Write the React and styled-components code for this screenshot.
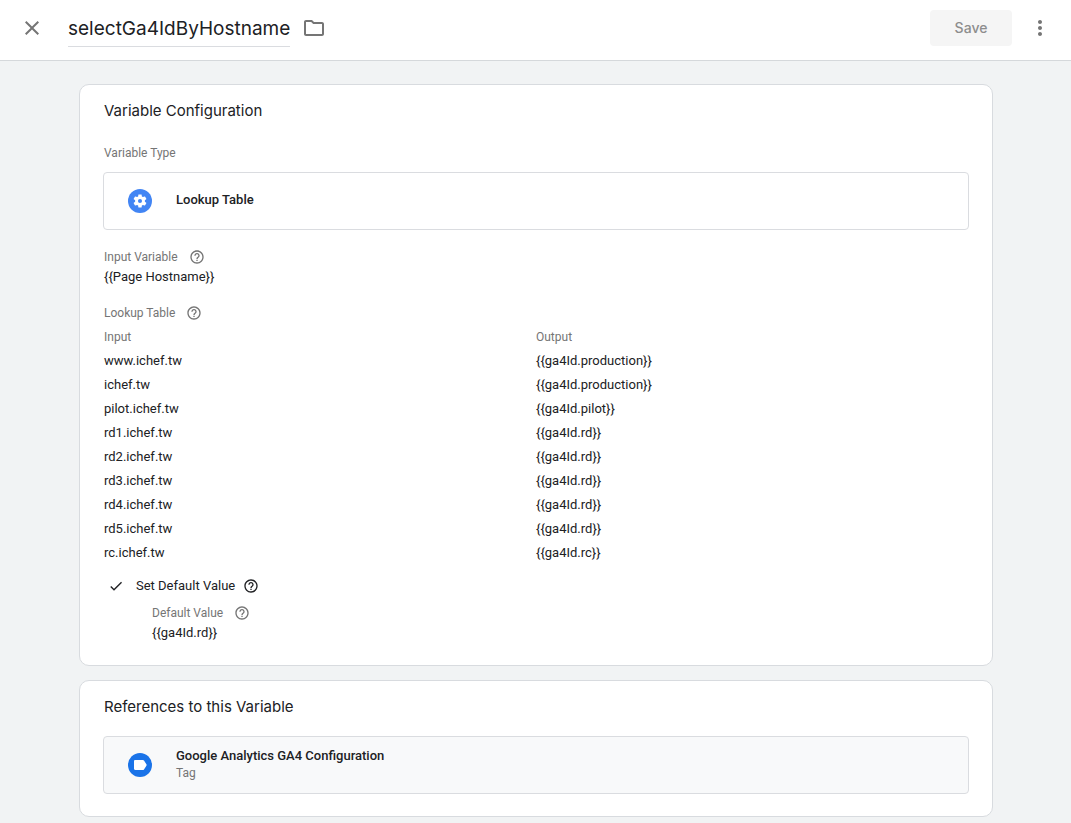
import React from "react";
import styled, { createGlobalStyle } from "styled-components";

const GlobalStyle = createGlobalStyle`
  *, *::before, *::after { box-sizing: border-box; }
  html { background: #f1f3f4; }
  body {
    margin: 0;
    background: #f1f3f4;
    color: #202124;
    font: 400 13px/20px Roboto, sans-serif;
  }
`;

const TopBar = styled.header`
  display: flex;
  align-items: center;
  height: 61px;
  padding: 0 19px 4px 20px;
  background: #fff;
  border-bottom: 1px solid #d5d8db;
`;

const IconButton = styled.button`
  display: inline-flex;
  align-items: center;
  justify-content: center;
  flex: none;
  width: ${(p) => p.$size || 24}px;
  height: ${(p) => p.$size || 24}px;
  padding: 0;
  border: 0;
  background: none;
  color: ${(p) => p.$color || "#757575"};
  cursor: pointer;
`;

const NameInput = styled.input`
  field-sizing: content;
  min-width: 40px;
  height: 36px;
  margin: 2px 12px 0 24px;
  padding: 0;
  border: 0;
  border-bottom: 1px solid #dadce0;
  outline: 0;
  background: none;
  color: #202124;
  font: 400 19px/32px Inter, sans-serif;
`;

const SaveButton = styled.button`
  width: 82px;
  height: 36px;
  margin: 0 16px 0 auto;
  border: 0;
  border-radius: 4px;
  background: #f5f5f5;
  color: #8d8d8d;
  font: 500 14px/20px Inter, sans-serif;
`;

const Page = styled.main`
  display: flex;
  flex-direction: column;
  gap: 14px;
  padding: 23px 78px 5px 79px;
`;

const Card = styled.section`
  padding: 14px 24px 22px;
  background: #fff;
  border: 1px solid #d8dbdf;
  border-radius: 10px;
`;

const CardTitle = styled.h2`
  margin: 0 0 ${(p) => p.$gap}px;
  font: 400 15px/24px Inter, sans-serif;
`;

const Label = styled.div`
  display: flex;
  align-items: center;
  gap: 11px;
  color: #757575;
  font-size: 12px;
`;

const Field = styled.div`
  margin-top: ${(p) => p.$top || 0}px;
`;

const entity = `
  display: flex;
  align-items: center;
  gap: 24px;
  min-height: 58px;
  padding: 0 24px;
  border: 1px solid #dadce0;
  border-radius: 4px;
  color: inherit;
  text-align: left;
  text-decoration: none;
`;

const TypeButton = styled.button`
  ${entity}
  width: calc(100% + 2px);
  margin: 9px -1px 0;
  background: #fff;
  font: inherit;
  cursor: pointer;
`;

const ReferenceLink = styled.a`
  ${entity}
  margin: 0 -1px;
  background: #f8f9fa;
`;

const EntityText = styled.span`
  display: flex;
  flex-direction: column;
  padding-bottom: 2px;
`;

const EntityName = styled.strong`
  font-weight: 500;
  line-height: 18px;
`;

const EntityKind = styled.span`
  color: #757575;
  font-size: 12px;
  line-height: 16px;
`;

const Table = styled.table`
  width: 100%;
  margin-top: 2px;
  border-collapse: collapse;
  table-layout: fixed;
  th, td { height: 24px; padding: 0; text-align: left; }
  th { color: #757575; font-size: 12px; font-weight: 400; }
`;

const CheckRow = styled.div`
  display: flex;
  align-items: center;
  gap: 8px;
  margin-top: 11px;
`;

const CheckLabel = styled.label`
  display: flex;
  align-items: center;
  gap: 8px;
`;

const CheckBox = styled.span`
  display: grid;
  width: 24px;
  height: 20px;
  place-items: center;
  > * { grid-area: 1 / 1; }
  input { appearance: none; width: 16px; height: 16px; margin: 0; }
  svg { visibility: hidden; pointer-events: none; }
  input:checked + svg { visibility: visible; }
`;

const Nested = styled.div`
  margin: 7px 0 0 48px;
`;

function Glyph({ size = 24, d }) {
  return (
    <svg width={size} height={size} viewBox="0 0 24 24" fill="currentColor" aria-hidden="true">
      <path d={d} />
    </svg>
  );
}

const paths = {
  close: "M19 6.41 17.59 5 12 10.59 6.41 5 5 6.41 10.59 12 5 17.59 6.41 19 12 13.41 17.59 19 19 17.59 13.41 12z",
  folder: "M9.17 6l2 2H20v10H4V6h5.17M10 4H4c-1.1 0-1.99.9-1.99 2L2 18c0 1.1.9 2 2 2h16c1.1 0 2-.9 2-2V8c0-1.1-.9-2-2-2h-8l-2-2z",
  more: "M12 8c1.1 0 2-.9 2-2s-.9-2-2-2-2 .9-2 2 .9 2 2 2zm0 2c-1.1 0-2 .9-2 2s.9 2 2 2 2-.9 2-2-.9-2-2-2zm0 6c-1.1 0-2 .9-2 2s.9 2 2 2 2-.9 2-2-.9-2-2-2z",
  help: "M11 18h2v-2h-2v2zm1-16C6.48 2 2 6.48 2 12s4.48 10 10 10 10-4.48 10-10S17.52 2 12 2zm0 18c-4.41 0-8-3.59-8-8s3.59-8 8-8 8 3.59 8 8-3.59 8-8 8zm0-14c-2.21 0-4 1.79-4 4h2c0-1.1.9-2 2-2s2 .9 2 2c0 2-3 1.75-3 5h2c0-2.25 3-2.5 3-5 0-2.21-1.79-4-4-4z",
  check: "M9 16.17 4.83 12l-1.42 1.41L9 19 21 7l-1.41-1.41z",
  gear: "M19.14 12.94c.04-.3.06-.61.06-.94 0-.32-.02-.64-.07-.94l2.03-1.58c.18-.14.23-.41.12-.61l-1.92-3.32c-.12-.22-.37-.29-.59-.22l-2.39.96c-.5-.38-1.03-.7-1.62-.94l-.36-2.54c-.04-.24-.24-.41-.48-.41h-3.84c-.24 0-.43.17-.47.41l-.36 2.54c-.59.24-1.13.57-1.62.94l-2.39-.96c-.22-.08-.47 0-.59.22L2.74 8.87c-.12.21-.08.47.12.61l2.03 1.58c-.05.3-.09.63-.09.94s.02.64.07.94l-2.03 1.58c-.18.14-.23.41-.12.61l1.92 3.32c.12.22.37.29.59.22l2.39-.96c.5.38 1.03.7 1.62.94l.36 2.54c.05.24.24.41.48.41h3.84c.24 0 .44-.17.47-.41l.36-2.54c.59-.24 1.13-.56 1.62-.94l2.39.96c.22.08.47 0 .59-.22l1.92-3.32c.12-.22.07-.47-.12-.61l-2.01-1.58zM12 15a3 3 0 1 1 0-6 3 3 0 0 1 0 6z",
};

function Help({ color }) {
  return (
    <IconButton $size={16} $color={color} aria-label="Help">
      <Glyph size={16} d={paths.help} />
    </IconButton>
  );
}

function GearBadge() {
  return (
    <svg width="24" height="24" viewBox="0 0 24 24" aria-hidden="true">
      <circle cx="12" cy="12" r="12" fill="#4285f4" />
      <g transform="translate(3.84 3.84) scale(.68)" fill="#fff">
        <path d={paths.gear} />
      </g>
    </svg>
  );
}

function TagBadge() {
  return (
    <svg width="24" height="24" viewBox="0 0 24 24" aria-hidden="true">
      <circle cx="12" cy="12" r="12" fill="#1a73e8" />
      <path d="M7.2 7h7.6c.5 0 .9.2 1.2.6l2.4 3.7c.3.4.3 1 0 1.4L16 16.4c-.3.4-.7.6-1.2.6H7.2c-.7 0-1.2-.5-1.2-1.2V8.2C6 7.5 6.5 7 7.2 7z" fill="#fff" />
    </svg>
  );
}

const rows = [
  ["www.ichef.tw", "{{ga4Id.production}}"],
  ["ichef.tw", "{{ga4Id.production}}"],
  ["pilot.ichef.tw", "{{ga4Id.pilot}}"],
  ["rd1.ichef.tw", "{{ga4Id.rd}}"],
  ["rd2.ichef.tw", "{{ga4Id.rd}}"],
  ["rd3.ichef.tw", "{{ga4Id.rd}}"],
  ["rd4.ichef.tw", "{{ga4Id.rd}}"],
  ["rd5.ichef.tw", "{{ga4Id.rd}}"],
  ["rc.ichef.tw", "{{ga4Id.rc}}"],
];

export default function App() {
  return (
    <>
      <GlobalStyle />
      <TopBar>
        <IconButton aria-label="Close"><Glyph d={paths.close} /></IconButton>
        <NameInput aria-label="Variable name" defaultValue="selectGa4IdByHostname" spellCheck={false} />
        <IconButton aria-label="Move to folder"><Glyph d={paths.folder} /></IconButton>
        <SaveButton disabled>Save</SaveButton>
        <IconButton aria-label="More actions"><Glyph d={paths.more} /></IconButton>
      </TopBar>
      <Page>
        <Card>
          <CardTitle $gap={20}>Variable Configuration</CardTitle>
          <Label>Variable Type</Label>
          <TypeButton>
            <GearBadge />
            <EntityText><EntityName>Lookup Table</EntityName></EntityText>
          </TypeButton>
          <Field $top={17}>
            <Label>Input Variable <Help /></Label>
            <div>{"{{Page Hostname}}"}</div>
          </Field>
          <Field $top={16}>
            <Label>Lookup Table <Help /></Label>
            <Table>
              <thead>
                <tr><th scope="col">Input</th><th scope="col">Output</th></tr>
              </thead>
              <tbody>
                {rows.map(([input, output]) => (
                  <tr key={input}><td>{input}</td><td>{output}</td></tr>
                ))}
              </tbody>
            </Table>
          </Field>
          <CheckRow>
            <CheckLabel>
              <CheckBox>
                <input type="checkbox" defaultChecked />
                <Glyph size={16} d={paths.check} />
              </CheckBox>
              Set Default Value
            </CheckLabel>
            <Help color="#202124" />
          </CheckRow>
          <Nested>
            <Label>Default Value <Help /></Label>
            <div>{"{{ga4Id.rd}}"}</div>
          </Nested>
        </Card>
        <Card>
          <CardTitle $gap={17}>References to this Variable</CardTitle>
          <ReferenceLink href="#tag">
            <TagBadge />
            <EntityText>
              <EntityName>Google Analytics GA4 Configuration</EntityName>
              <EntityKind>Tag</EntityKind>
            </EntityText>
          </ReferenceLink>
        </Card>
      </Page>
    </>
  );
}
